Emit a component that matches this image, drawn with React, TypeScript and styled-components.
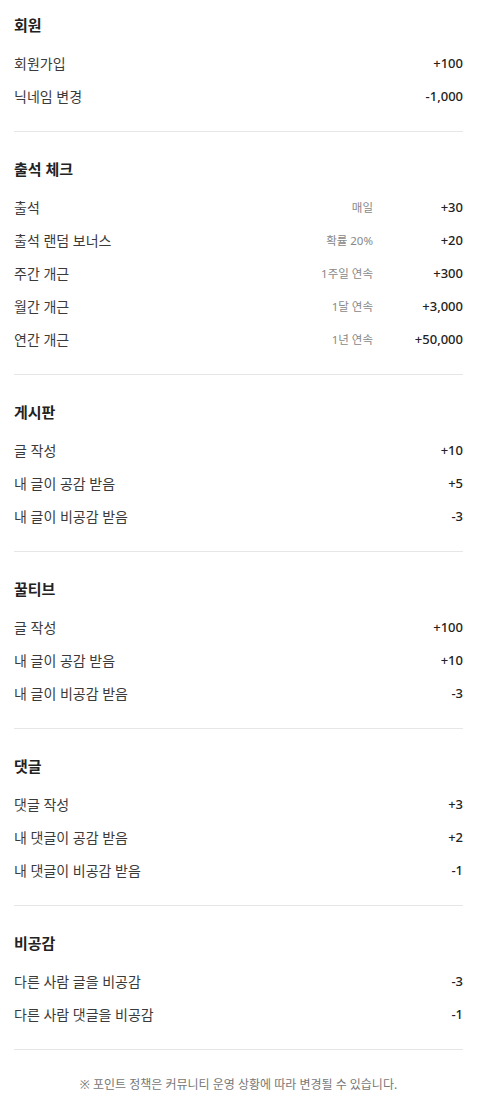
import React from 'react'
import styled, { createGlobalStyle } from 'styled-components'

const GlobalStyle = createGlobalStyle`
  html, body {
    margin: 0;
    padding: 0;
    background: #fff;
  }
  body {
    font-family: 'Noto Sans', 'Noto Sans CJK KR', sans-serif;
    color: #333;
  }
`

const Page = styled.div`
  padding: 0 20px 0 14px;
`

const Section = styled.section<{ $first?: boolean }>`
  padding: ${(p) => (p.$first ? '14px' : '26px')} 0 19px;
  border-bottom: 1px solid #e6e6e6;
`

const Title = styled.h2`
  margin: 0 0 10px;
  font-size: 15px;
  line-height: 22px;
  font-weight: 700;
  color: #222;
`

const Row = styled.div`
  display: flex;
  align-items: center;
  height: 33px;
`

const Label = styled.span`
  flex: 1;
  font-size: 14px;
  color: #3a3a3a;
`

const Note = styled.span`
  font-size: 11.5px;
  color: #888;
`

const Value = styled.span`
  width: 90px;
  text-align: right;
  font-size: 13px;
  font-weight: 500;
  color: #222;
`

const Footer = styled.p`
  margin: 0;
  padding: 26px 0 24px;
  text-align: center;
  font-size: 12px;
  line-height: 17px;
  color: #777;
`

type Item = { label: string; note?: string; value: string }

const sections: { title: string; items: Item[] }[] = [
  {
    title: '회원',
    items: [
      { label: '회원가입', value: '+100' },
      { label: '닉네임 변경', value: '-1,000' },
    ],
  },
  {
    title: '출석 체크',
    items: [
      { label: '출석', note: '매일', value: '+30' },
      { label: '출석 랜덤 보너스', note: '확률 20%', value: '+20' },
      { label: '주간 개근', note: '1주일 연속', value: '+300' },
      { label: '월간 개근', note: '1달 연속', value: '+3,000' },
      { label: '연간 개근', note: '1년 연속', value: '+50,000' },
    ],
  },
  {
    title: '게시판',
    items: [
      { label: '글 작성', value: '+10' },
      { label: '내 글이 공감 받음', value: '+5' },
      { label: '내 글이 비공감 받음', value: '-3' },
    ],
  },
  {
    title: '꿀티브',
    items: [
      { label: '글 작성', value: '+100' },
      { label: '내 글이 공감 받음', value: '+10' },
      { label: '내 글이 비공감 받음', value: '-3' },
    ],
  },
  {
    title: '댓글',
    items: [
      { label: '댓글 작성', value: '+3' },
      { label: '내 댓글이 공감 받음', value: '+2' },
      { label: '내 댓글이 비공감 받음', value: '-1' },
    ],
  },
  {
    title: '비공감',
    items: [
      { label: '다른 사람 글을 비공감', value: '-3' },
      { label: '다른 사람 댓글을 비공감', value: '-1' },
    ],
  },
]

const App = () => {
  return (
    <Page>
      <GlobalStyle />
      {sections.map((s, i) => (
        <Section key={s.title} $first={i === 0}>
          <Title>{s.title}</Title>
          {s.items.map((it) => (
            <Row key={it.label}>
              <Label>{it.label}</Label>
              {it.note && <Note>{it.note}</Note>}
              <Value>{it.value}</Value>
            </Row>
          ))}
        </Section>
      ))}
      <Footer>※ 포인트 정책은 커뮤니티 운영 상황에 따라 변경될 수 있습니다.</Footer>
    </Page>
  )
}

export default App
